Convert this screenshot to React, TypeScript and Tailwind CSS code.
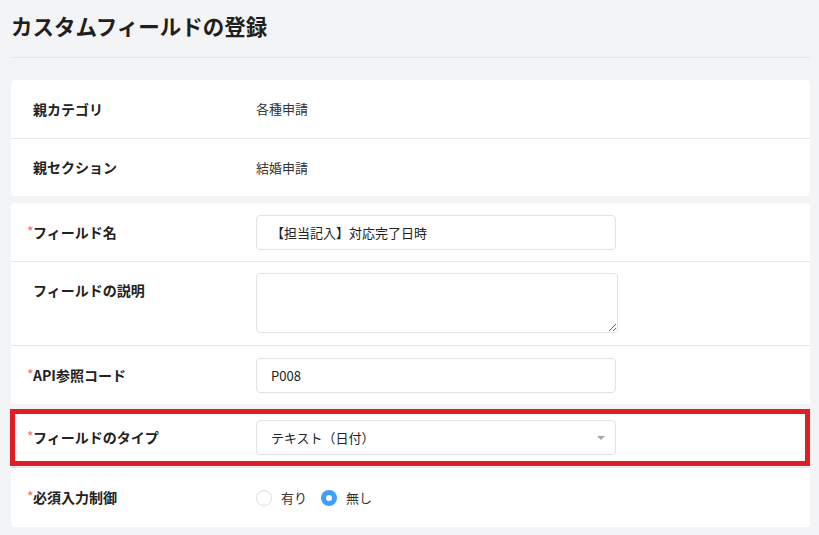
const Asterisk = ({ on }: { on: boolean }) => (
  <span className="w-[6px] text-[14px] font-normal text-[#f56c6c] relative top-[-1px]">
    {on ? '*' : ''}
  </span>
)

const Label = ({ text, required }: { text: string; required?: boolean }) => (
  <div className="w-[229px] shrink-0 flex items-center h-[35px] text-[14px] font-bold text-[#222]">
    <span className="flex items-center">
      <Asterisk on={!!required} />
      <span>{text}</span>
    </span>
  </div>
)

const TextInput = ({ value }: { value: string }) => (
  <input
    readOnly
    value={value}
    className="w-[360px] h-[35px] rounded border border-[#dfe3e8] bg-white px-[14px] text-[13px] text-[#222] outline-none"
  />
)

const Radio = ({ label, checked }: { label: string; checked?: boolean }) => (
  <label className="flex items-center gap-[9px] text-[13px] text-[#333]">
    {checked ? (
      <span className="w-[16px] h-[16px] rounded-full bg-[#409eff] flex items-center justify-center">
        <span className="w-[6px] h-[6px] rounded-full bg-white" />
      </span>
    ) : (
      <span className="w-[16px] h-[16px] rounded-full border border-[#dcdfe6] bg-white" />
    )}
    {label}
  </label>
)

export default function App() {
  return (
    <div className="min-h-[535px] bg-[#f3f4f6] pl-[11px] pr-[9px] font-['Noto_Sans_CJK_JP','Noto_Sans',sans-serif]">
      {/* Header */}
      <div className="pt-[11px] pb-[16px] border-b border-[#e3e5e8]">
        <h1 className="text-[21.5px] leading-[30px] font-bold text-[#1f1f1f]">カスタムフィールドの登録</h1>
      </div>

      {/* Parent info */}
      <div className="mt-[22px] bg-white rounded">
        <div className="flex items-center h-[59px] px-[16px] border-b border-[#e3e7eb]">
          <Label text="親カテゴリ" />
          <span className="text-[13px] text-[#333]">各種申請</span>
        </div>
        <div className="flex items-center h-[57px] px-[16px]">
          <Label text="親セクション" />
          <span className="text-[13px] text-[#333]">結婚申請</span>
        </div>
      </div>

      {/* Field settings */}
      <div className="mt-[7px] bg-white rounded-t">
        <div className="flex items-center h-[59px] px-[16px] border-b border-[#e3e7eb]">
          <Label text="フィールド名" required />
          <TextInput value="【担当記入】対応完了日時" />
        </div>
        <div className="flex items-start h-[84px] pt-[11px] px-[16px] border-b border-[#e3e7eb]">
          <Label text="フィールドの説明" />
          <textarea
            readOnly
            className="w-[362px] h-[60px] rounded border border-[#dfe3e8] bg-white px-[14px] py-[6px] text-[13px] outline-none"
          />
        </div>
        <div className="flex items-center h-[58px] px-[16px]">
          <Label text="API参照コード" required />
          <TextInput value="P008" />
        </div>
      </div>

      {/* Highlighted type row */}
      <div className="mt-[5px] ml-[-1px] border-[5px] border-[#e31b23] bg-white h-[57px] flex items-center pl-[12px]">
        <Label text="フィールドのタイプ" required />
        <div className="relative w-[360px] h-[35px] rounded border border-[#dfe3e8] bg-white flex items-center px-[14px] text-[13px] text-[#222]">
          テキスト（日付）
          <span className="absolute right-[10px] top-[15px] w-0 h-0 border-l-[4px] border-r-[4px] border-t-[4px] border-l-transparent border-r-transparent border-t-[#a3a8b0]" />
        </div>
      </div>

      {/* Required control */}
      <div className="bg-white rounded-b border-t border-[#e3e7eb] mt-[1px] h-[60px] flex items-center px-[16px]">
        <Label text="必須入力制御" required />
        <div className="flex items-center gap-[14px]">
          <Radio label="有り" />
          <Radio label="無し" checked />
        </div>
      </div>
    </div>
  )
}
